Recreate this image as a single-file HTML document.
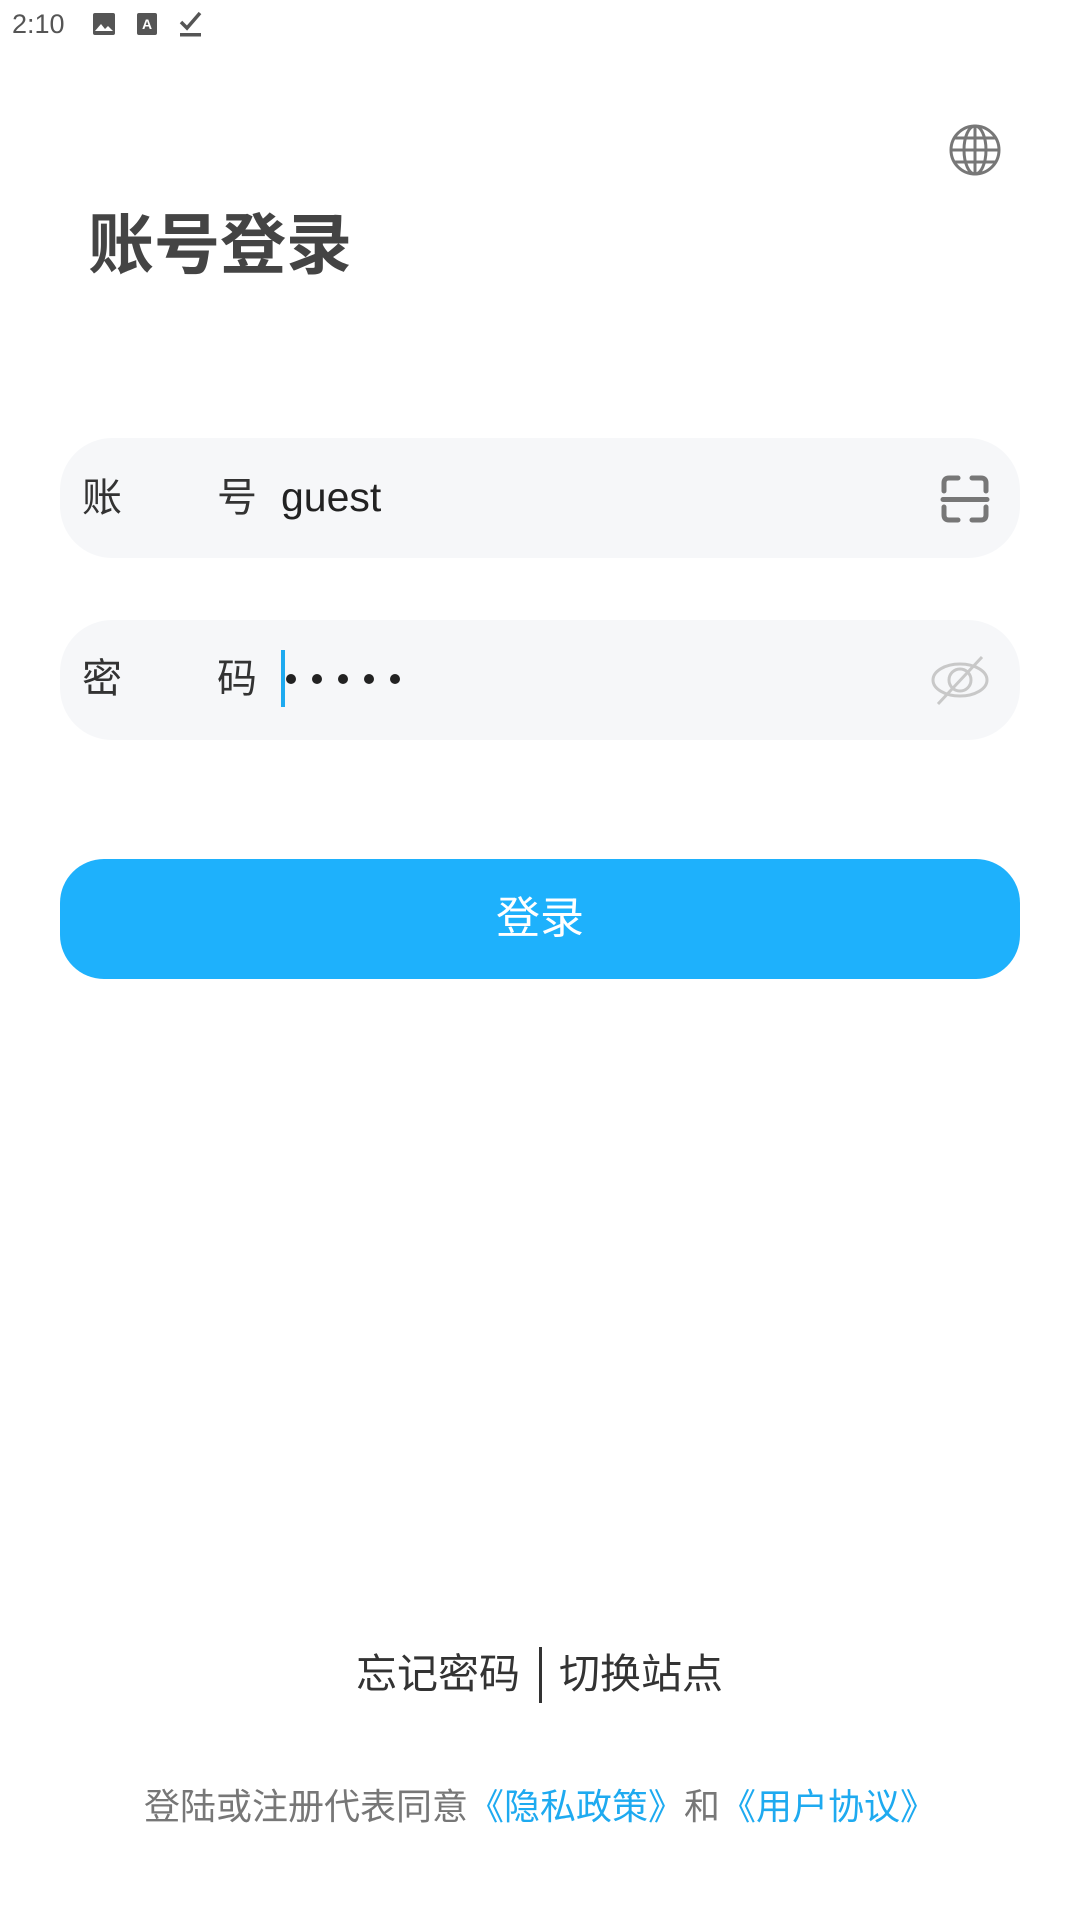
<!DOCTYPE html>
<html><head><meta charset="utf-8">
<style>
*{margin:0;padding:0;box-sizing:border-box}
body{width:1080px;height:1920px;background:#fff;position:relative;overflow:hidden;font-family:"Liberation Sans","Noto Sans CJK SC",sans-serif}
.abs{position:absolute}
.field{position:absolute;left:60px;width:960px;height:120px;background:#f6f7f9;border-radius:52px}
.lbl{position:absolute;font-size:40px;color:#333;line-height:40px}
</style></head><body>
<div class="abs" style="left:12px;top:9px;font-size:27px;color:#555;">2:10</div>
<svg class="abs" style="left:92px;top:12px" width="24" height="24" viewBox="0 0 24 24"><rect x="1" y="1" width="22" height="22" rx="2" fill="#555"/><path d="M3 19l6-7 4 5 3-3 5 5z" fill="#fff"/></svg>
<svg class="abs" style="left:136px;top:12px" width="22" height="24" viewBox="0 0 22 24"><rect x="1" y="1" width="20" height="22" rx="2" fill="#555"/><text x="11" y="17" font-size="14" font-weight="bold" fill="#fff" text-anchor="middle" font-family="Liberation Sans">A</text></svg>
<svg class="abs" style="left:178px;top:10px" width="26" height="28" viewBox="0 0 26 28"><path d="M3 12l6 6L22 3" stroke="#555" stroke-width="3.5" fill="none"/><rect x="2" y="23" width="21" height="3.5" fill="#555"/></svg>

<svg class="abs" style="left:948px;top:123px" width="54" height="54" viewBox="0 0 54 54" fill="none" stroke="#777" stroke-width="3"><circle cx="27" cy="27" r="24"/><ellipse cx="27" cy="27" rx="11" ry="24"/><path d="M27 3v48M3 27h48M7 15h40M7 39h40"/></svg>

<div class="abs" style="left:88px;top:200px;font-size:66px;font-weight:bold;color:#444;line-height:80px;font-family:'Noto Sans CJK SC',sans-serif">账号登录</div>

<div class="field" style="top:438px"></div>
<div class="lbl" style="left:82px;top:478px">账</div>
<div class="lbl" style="left:217px;top:478px">号</div>
<div class="lbl" style="left:281px;top:477px;font-size:41px;color:#222">guest</div>
<svg class="abs" style="left:940px;top:474px" width="50" height="50" viewBox="0 0 50 50" fill="none" stroke="#777" stroke-width="5" stroke-linecap="round"><path d="M4 17V9q0-5 5-5h9M32 4h9q5 0 5 5v8M4 33v8q0 5 5 5h9M32 46h9q5 0 5-5V33"/><path d="M3 25.5h44"/></svg>

<div class="field" style="top:620px"></div>
<div class="lbl" style="left:82px;top:659px">密</div>
<div class="lbl" style="left:217px;top:659px">码</div>
<div class="abs" style="left:281px;top:650px;width:4px;height:57px;background:#1eaaf0"></div>
<svg class="abs" style="left:282px;top:669px" width="120" height="20"><g fill="#222"><circle cx="9" cy="10" r="5"/><circle cx="35" cy="10" r="5"/><circle cx="61" cy="10" r="5"/><circle cx="87" cy="10" r="5"/><circle cx="113" cy="10" r="5"/></g></svg>
<svg class="abs" style="left:930px;top:654px" width="60" height="52" viewBox="0 0 60 52" fill="none" stroke="#c8c8c8" stroke-width="3"><ellipse cx="30" cy="26" rx="27" ry="16"/><circle cx="30" cy="26" r="11"/><path d="M8 50L52 3"/></svg>

<div class="abs" style="left:60px;top:859px;width:960px;height:120px;background:#1eb1fc;border-radius:44px;color:#fff;font-size:44px;text-align:center;line-height:120px">登录</div>

<div class="abs" style="left:356px;top:1650px;font-size:41px;color:#333;line-height:48px">忘记密码</div>
<div class="abs" style="left:539px;top:1647px;width:3px;height:56px;background:#333"></div>
<div class="abs" style="left:559px;top:1650px;font-size:41px;color:#333;line-height:48px">切换站点</div>

<div class="abs" style="left:0;width:1080px;top:1785px;text-align:center;font-size:36px;color:#777;line-height:44px">登陆或注册代表同意<span style="color:#1eaaf0">《隐私政策》</span>和<span style="color:#1eaaf0">《用户协议》</span></div>
</body></html>
